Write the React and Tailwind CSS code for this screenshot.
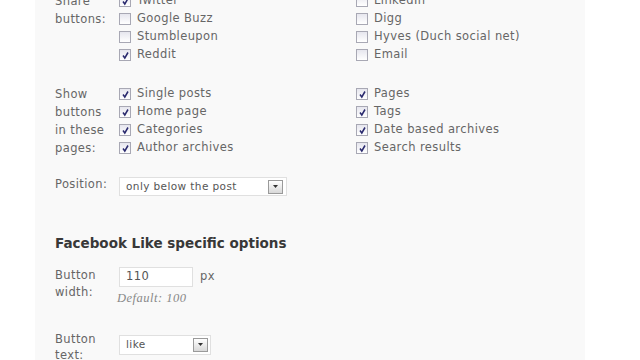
const Check = ({ on }) => (
  <span className="w-[12px] h-[12px] shrink-0 border border-[#a8a8b4] bg-gradient-to-b from-[#e6e6ee] to-white flex items-center justify-center">
    {on && (
      <svg width="9" height="9" viewBox="0 0 9 9">
        <path d="M2 4.5 L3.8 7 L7 1.5" fill="none" stroke="#2a2a6e" strokeWidth="1.5" />
      </svg>
    )}
  </span>
);

const Item = ({ on, label }) => (
  <div className="h-[18px] flex items-center gap-[6px]">
    <Check on={on} />
    <span>{label}</span>
  </div>
);

const Arrow = () => (
  <span className="w-[15px] h-[14px] border border-[#9a9a9a] bg-gradient-to-b from-white to-[#d8d8d8] flex items-center justify-center">
    <svg width="5" height="3" viewBox="0 0 5 3">
      <path d="M0 0 H5 L2.5 3 Z" fill="#333" />
    </svg>
  </span>
);

const CheckGroup = ({ label, left, right }) => (
  <div className="flex">
    <div className="w-[64px] leading-[18px]">{label}</div>
    <div className="w-[237px]">
      {left.map(([on, t]) => <Item key={t} on={on} label={t} />)}
    </div>
    <div>
      {right.map(([on, t]) => <Item key={t} on={on} label={t} />)}
    </div>
  </div>
);

export default function App() {
  return (
    <div className="w-[640px] h-[360px] overflow-hidden bg-white" style={{ fontFamily: '"DejaVu Sans", Verdana, sans-serif' }}>
      <div className="ml-[35px] w-[550px] h-full bg-[#f9f9f9] pl-[20px] text-[11.5px] tracking-[0.4px] text-[#666] flex flex-col">
        <div className="-mt-[8px]">
          <CheckGroup
            label={<>Share<br />buttons:</>}
            left={[[true, 'Twitter'], [false, 'Google Buzz'], [false, 'Stumbleupon'], [true, 'Reddit']]}
            right={[[false, 'LinkedIn'], [false, 'Digg'], [false, 'Hyves (Duch social net)'], [false, 'Email']]}
          />
          <div className="mt-[21px]">
            <CheckGroup
              label={<>Show<br />buttons<br />in these<br />pages:</>}
              left={[[true, 'Single posts'], [true, 'Home page'], [true, 'Categories'], [true, 'Author archives']]}
              right={[[true, 'Pages'], [true, 'Tags'], [true, 'Date based archives'], [true, 'Search results']]}
            />
          </div>
          <div className="mt-[20px] flex">
            <div className="w-[64px] leading-[14px]">Position:</div>
            <div className="w-[168px] h-[19px] border border-[#e0e0e0] bg-white flex items-center justify-between pl-[6px] pr-[3px] text-[10.5px] text-[#555]">
              <span>only below the post</span>
              <Arrow />
            </div>
          </div>
          <h3 className="mt-[38px] text-[13.5px] leading-[18px] tracking-normal text-[#383838] font-bold">Facebook Like specific options</h3>
          <div className="mt-[15px] flex">
            <div className="w-[64px] leading-[17px]">Button<br />width:</div>
            <div>
              <div className="flex items-center">
                <div className="w-[74px] h-[20px] border border-[#e0e0e0] bg-white pl-[6px] flex items-center text-[#555]">110</div>
                <span className="ml-[7px]">px</span>
              </div>
              <div className="-ml-[2px] mt-[2px] text-[12.5px] tracking-[0.5px] italic text-[#888]" style={{ fontFamily: '"Liberation Serif", Georgia, serif' }}>Default: 100</div>
            </div>
          </div>
          <div className="mt-[23px] flex">
            <div className="w-[64px] leading-[16px]">Button<br />text:</div>
            <div className="mt-[4px] w-[92px] h-[20px] border border-[#e0e0e0] bg-white flex items-center justify-between pl-[6px] pr-[2px] text-[10.5px] text-[#555]">
              <span>like</span>
              <Arrow />
            </div>
          </div>
        </div>
      </div>
    </div>
  );
}
